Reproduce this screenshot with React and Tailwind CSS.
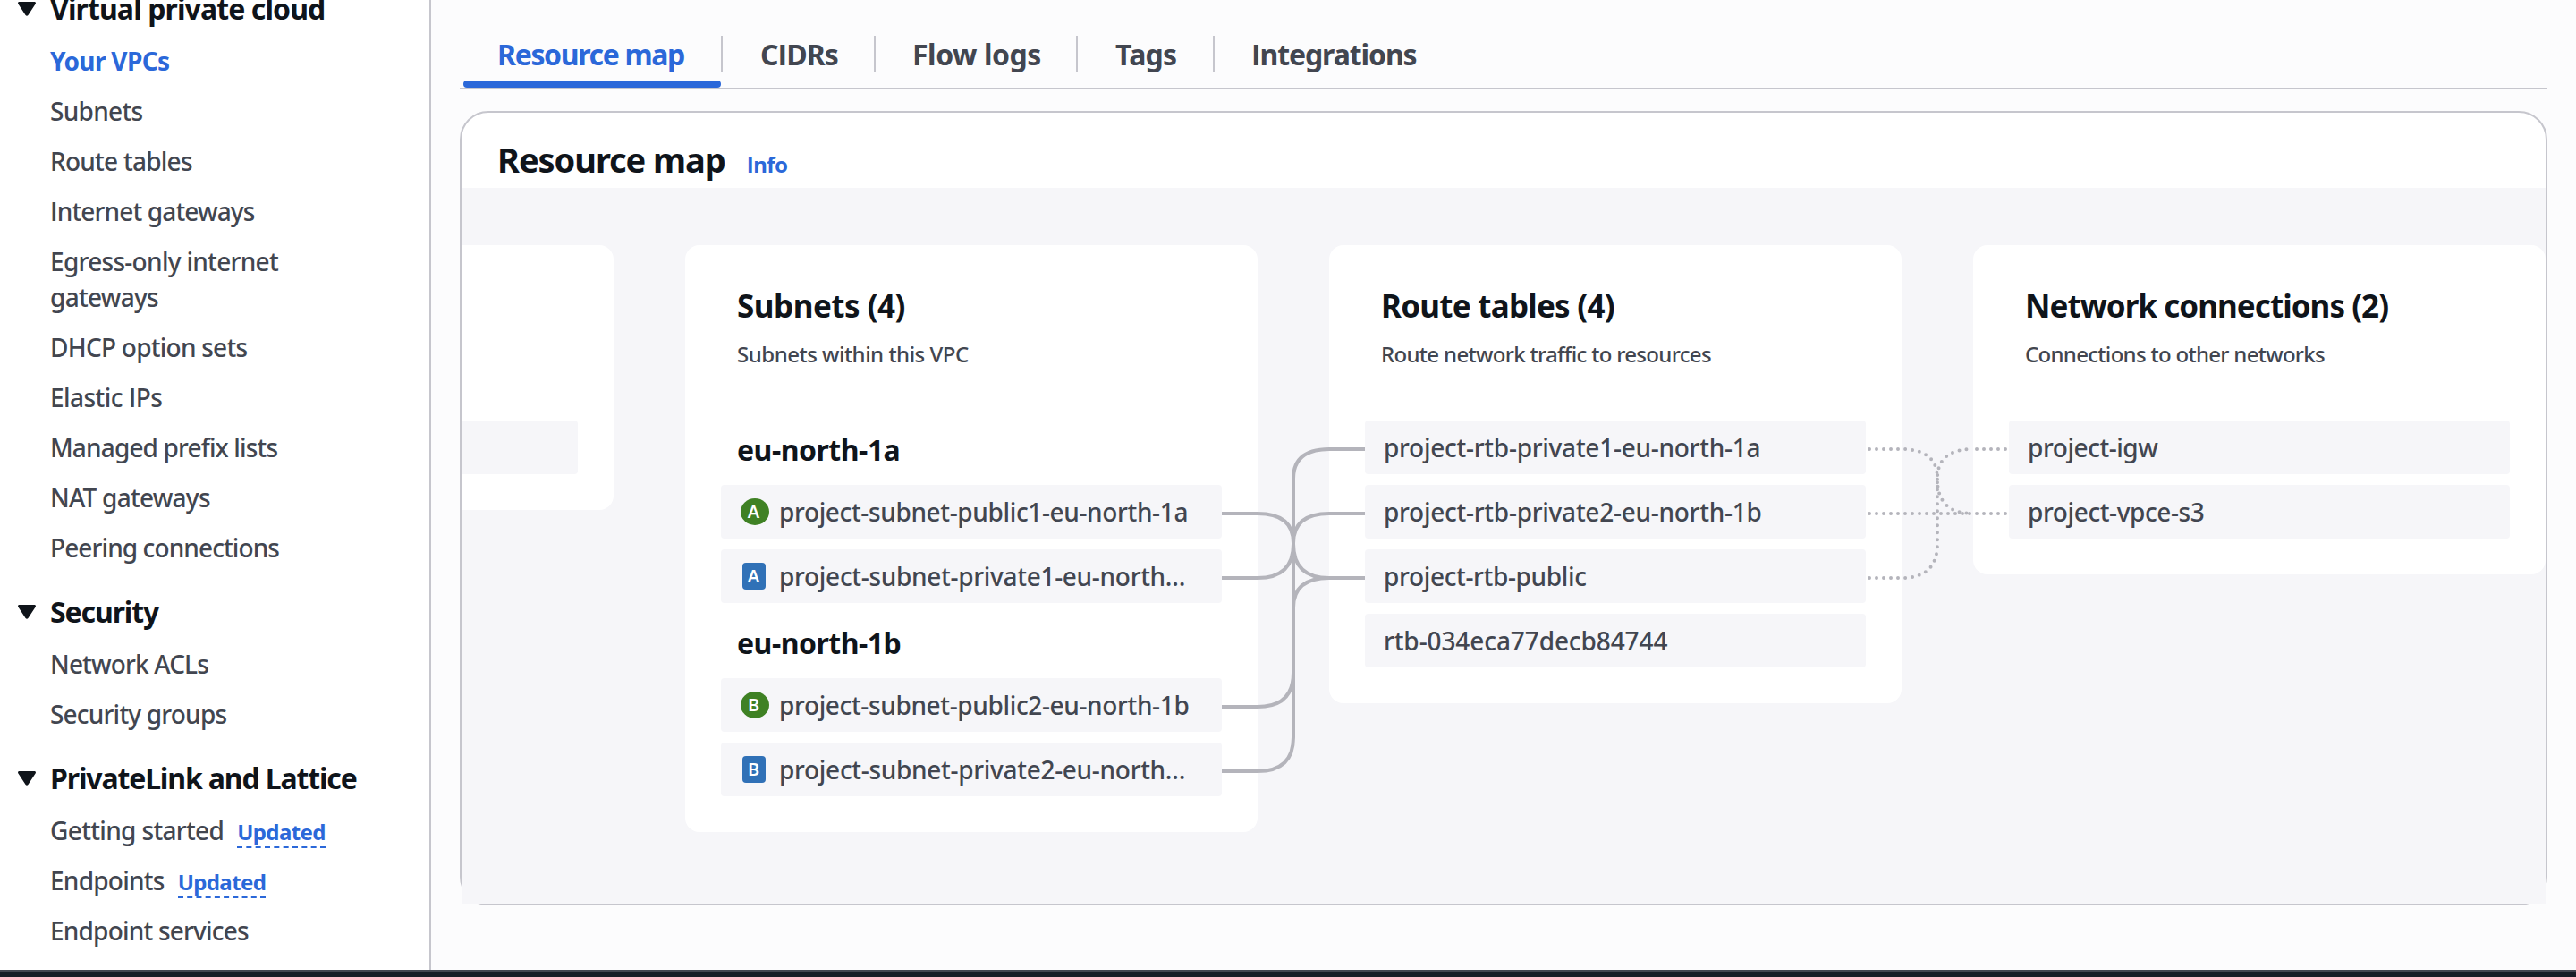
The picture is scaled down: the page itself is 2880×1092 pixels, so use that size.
import { Fragment } from "react";

const NAV = [
  {
    title: "Virtual private cloud",
    tracking: "tracking-[-0.9px]",
    items: [
      { label: "Your VPCs", tracking: "tracking-[-0.65px]", active: true },
      { label: "Subnets", tracking: "tracking-[-0.7px]" },
      { label: "Route tables", tracking: "tracking-[-0.75px]" },
      { label: "Internet gateways", tracking: "tracking-[-0.85px]" },
      { label: "Egress-only internet gateways", tracking: "tracking-[-0.7px]" },
      { label: "DHCP option sets", tracking: "tracking-[-0.75px]" },
      { label: "Elastic IPs", tracking: "tracking-[-0.55px]" },
      { label: "Managed prefix lists", tracking: "tracking-[-0.85px]" },
      { label: "NAT gateways", tracking: "tracking-[-0.75px]" },
      { label: "Peering connections", tracking: "tracking-[-0.9px]" },
    ],
  },
  {
    title: "Security",
    tracking: "tracking-[-1.1px]",
    items: [
      { label: "Network ACLs", tracking: "tracking-[-0.85px]" },
      { label: "Security groups", tracking: "tracking-[-0.8px]" },
    ],
  },
  {
    title: "PrivateLink and Lattice",
    tracking: "tracking-[-1.15px]",
    items: [
      { label: "Getting started", tracking: "tracking-[-0.65px]", badge: "Updated" },
      { label: "Endpoints", tracking: "tracking-[-0.75px]", badge: "Updated" },
      { label: "Endpoint services", tracking: "tracking-[-0.8px]" },
    ],
  },
];

const TABS = [
  { label: "Resource map", box: "w-[290px] pl-[38px] border-r-2 text-[#2b68d9]", tracking: "tracking-[-1.35px]" },
  { label: "CIDRs", box: "w-[171px] pl-[42px] border-r-2 text-[#424650]", tracking: "tracking-[-0.95px]" },
  { label: "Flow logs", box: "w-[226px] pl-[41px] border-r-2 text-[#424650]", tracking: "tracking-[-0.45px]" },
  { label: "Tags", box: "w-[153px] pl-[42px] border-r-2 text-[#424650]", tracking: "tracking-[-0.75px]" },
  { label: "Integrations", box: "pl-[41px] text-[#424650]", tracking: "tracking-[-1.1px]" },
];

/* Capital I is set in a face whose I has no serifs. */
function Label({ children, bold }) {
  const parts = children.split("I");
  return parts.map((part, i) => (
    <Fragment key={i}>
      {i > 0 && <span className={`font-['Open_Sans',sans-serif] ${bold ? "font-bold" : "font-semibold"}`}>I</span>}
      {part}
    </Fragment>
  ));
}

function Caret() {
  return (
    <svg className="mt-3 h-4 w-5 shrink-0" viewBox="0 0 20 16" fill="#0f141a">
      <path d="M1.6 0H18.4C19.8 0 20.4 1.3 19.6 2.4L11.4 14.9C10.7 16 9.3 16 8.6 14.9L0.4 2.4C-0.4 1.3 0.2 0 1.6 0Z" />
    </svg>
  );
}

function Sidebar() {
  return (
    <nav className="w-[482px] shrink-0 border-r-2 border-[#c6c6cd] bg-white">
      <div className="-mt-[10px] flex flex-col gap-8">
        {NAV.map((section) => (
          <section key={section.title}>
            <div className="flex pl-5">
              <Caret />
              <h2 className={`ml-4 text-[32px] leading-10 font-bold whitespace-nowrap text-[#0f141a] ${section.tracking}`}>
                {section.title}
              </h2>
            </div>
            <ul className="mt-[18px] flex flex-col gap-4 pl-14">
              {section.items.map((item) => (
                <li key={item.label} className="flex h-auto w-[320px] items-baseline text-[28px] leading-10">
                  <a
                    className={`${item.tracking} ${item.active ? "font-bold text-[#2b68d9]" : "font-medium text-[#424650]"} ${
                      item.badge ? "whitespace-nowrap" : ""
                    }`}
                  >
                    <Label>{item.label}</Label>
                  </a>
                  {item.badge && (
                    <span className="ml-[15px] border-b-2 border-dashed border-[#2b68d9] text-2xl leading-8 font-bold tracking-[-0.6px] text-[#2b68d9]">
                      {item.badge}
                    </span>
                  )}
                </li>
              ))}
            </ul>
          </section>
        ))}
      </div>
    </nav>
  );
}

function Row({ children, badge, badgeShape, tracking }) {
  return (
    <div className={`flex h-[60px] items-center rounded-[4px] bg-[#f6f6f9] ${badge ? "pl-[22px]" : "pl-[21px]"}`}>
      {badge && (
        <span className="mr-[11px] flex w-8 shrink-0 justify-start">
          <span
            className={`flex h-[30px] items-center justify-center text-xl leading-none font-semibold text-white ${
              badgeShape === "circle" ? "w-8 rounded-[50%] bg-[#3f8124] pr-[3px]" : "ml-[2px] w-[26px] rounded-[4px] bg-[#3071b7] pr-px"
            }`}
          >
            {badge}
          </span>
        </span>
      )}
      <span className={`text-[28px] leading-10 font-medium whitespace-nowrap text-[#424650] ${tracking}`}>{children}</span>
    </div>
  );
}

function Zone({ children }) {
  return (
    <h4 className="-mb-3 h-[72px] pt-[13px] pl-[18px] text-[32px] leading-10 font-bold tracking-[-0.5px] text-[#0f141a]">{children}</h4>
  );
}

function Card({ title, titleTracking, subtitle, subtitleTracking, children }) {
  return (
    <section className="w-[640px] shrink-0 rounded-2xl bg-white px-10 pb-10">
      <header className="h-[196px] pt-[46px] pl-[18px] whitespace-nowrap">
        <h3 className={`h-11 text-[35px] leading-[44px] font-bold text-[#0f141a] ${titleTracking}`}>{title}</h3>
        <p className={`mt-4 text-2xl leading-8 font-medium text-[#424650] ${subtitleTracking}`}>{subtitle}</p>
      </header>
      <div className="flex flex-col gap-3">{children}</div>
    </section>
  );
}

/* Coordinates are relative to the canvas' top left corner. */
const SOLID = [
  "M850 364H890Q930 364 930 397V398Q930 436 970 436H1010",
  "M850 436H890Q930 436 930 398V325Q930 292 970 292H1010",
  "M850 580H890Q930 580 930 542V469Q930 436 970 436H1010",
  "M850 652H890Q930 652 930 614V397Q930 364 970 364H1010",
];

const DOTTED = [
  "M1570 292H1610",
  "M1570 364H1610",
  "M1570 436H1610",
  "M1690 292H1730",
  "M1690 364H1730",
  "M1610 364H1690",
  "M1610 292Q1650 292 1650 325V326Q1650 364 1690 364",
  "M1610 436Q1650 436 1650 398V325Q1650 292 1690 292",
];

function Connectors() {
  return (
    <svg className="pointer-events-none absolute inset-0 h-full w-full" fill="none" stroke="#b4b4bb" strokeWidth="4">
      {SOLID.map((d) => (
        <path key={d} d={d} />
      ))}
      {DOTTED.map((d) => (
        <path key={d} d={d} strokeLinecap="round" strokeDasharray="0 8" strokeDashoffset="-4" />
      ))}
    </svg>
  );
}

function ResourceMap() {
  return (
    <div className="mt-6 h-[888px] rounded-[32px] border-2 border-[#c6c6cd] bg-white">
      <div className="flex h-[84px] items-baseline pt-7 pl-10">
        <h2 className="text-[38px] leading-[48px] font-bold tracking-[-1.05px] text-[#0f141a]">Resource map</h2>
        <a className="ml-6 text-2xl leading-8 font-bold tracking-[-0.5px] text-[#2b68d9]">
          <Label bold>Info</Label>
        </a>
      </div>
      <div className="relative h-[800px] overflow-hidden bg-[#f6f6f9]">
        <div className="-ml-[470px] flex items-start gap-20 pt-16">
          <section className="h-[296px] w-[640px] shrink-0 rounded-2xl bg-white px-10 pt-[196px]">
            <div className="h-[60px] rounded-[4px] bg-[#f6f6f9]" />
          </section>
          <Card
            title="Subnets (4)"
            titleTracking="tracking-[-0.5px]"
            subtitle="Subnets within this VPC"
            subtitleTracking="tracking-[-0.5px]"
          >
            <Zone>eu-north-1a</Zone>
            <Row badge="A" badgeShape="circle" tracking="tracking-[-0.36px]">project-subnet-public1-eu-north-1a</Row>
            <Row badge="A" badgeShape="square" tracking="tracking-[-0.3px]">project-subnet-private1-eu-north…</Row>
            <Zone>eu-north-1b</Zone>
            <Row badge="B" badgeShape="circle" tracking="tracking-[-0.36px]">project-subnet-public2-eu-north-1b</Row>
            <Row badge="B" badgeShape="square" tracking="tracking-[-0.3px]">project-subnet-private2-eu-north…</Row>
          </Card>
          <Card
            title="Route tables (4)"
            titleTracking="tracking-[-0.75px]"
            subtitle="Route network traffic to resources"
            subtitleTracking="tracking-[-0.68px]"
          >
            <Row tracking="tracking-[-0.26px]">project-rtb-private1-eu-north-1a</Row>
            <Row tracking="tracking-[-0.26px]">project-rtb-private2-eu-north-1b</Row>
            <Row tracking="tracking-[-0.35px]">project-rtb-public</Row>
            <Row tracking="tracking-[-0.1px]">rtb-034eca77decb84744</Row>
          </Card>
          <Card
            title="Network connections (2)"
            titleTracking="tracking-[-0.95px]"
            subtitle="Connections to other networks"
            subtitleTracking="tracking-[-0.7px]"
          >
            <Row tracking="tracking-[-0.45px]">project-igw</Row>
            <Row tracking="tracking-[-0.4px]">project-vpce-s3</Row>
          </Card>
        </div>
        <Connectors />
      </div>
    </div>
  );
}

export default function App() {
  return (
    <div className="flex h-[1092px] w-[2880px] flex-col overflow-hidden bg-[#fcfcfd] font-['Noto_Sans',sans-serif]">
      <div className="flex h-[1084px] overflow-hidden">
        <Sidebar />
        <main className="flex-1 px-8">
          <div className="border-b-2 border-[#c6c6cd] pt-10 pl-1">
            <div className="flex h-10">
              {TABS.map((tab) => (
                <div
                  key={tab.label}
                  className={`h-10 border-[#c6c6cd] text-[32px] leading-[41px] font-bold whitespace-nowrap ${tab.box} ${tab.tracking}`}
                >
                  <Label bold>{tab.label}</Label>
                </div>
              ))}
            </div>
            <div className="mt-[10px] h-2 w-72 rounded-[4px] bg-[#2b68d9]" />
          </div>
          <ResourceMap />
        </main>
      </div>
      <footer className="h-2 shrink-0 border-t-2 border-[#424650] bg-[#161d26]" />
    </div>
  );
}
